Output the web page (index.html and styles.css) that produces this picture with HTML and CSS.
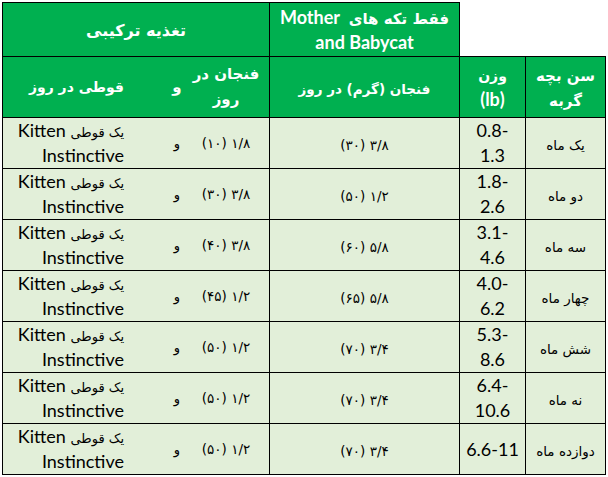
FILE: index.html
```html
<!DOCTYPE html>
<html lang="fa">
<head>
<meta charset="utf-8">
<title>Kitten feeding</title>
<link rel="stylesheet" href="styles.css">
</head>
<body>
<table class="feed" dir="rtl">
  <colgroup>
    <col class="c-age"><col class="c-wt"><col class="c-cup"><col class="c-mix">
  </colgroup>
  <tr class="h1">
    <td class="blank" colspan="2"></td>
    <th class="hd"><span class="line"><span class="fa s15">فقط تکه های</span>&nbsp; Mother</span><br>and Babycat</th>
    <th class="hd"><span class="fa s16">تغذیه ترکیبی</span></th>
  </tr>
  <tr class="h2">
    <th class="hd"><span class="fa s15">سن بچه<br>گربه</span></th>
    <th class="hd"><span class="fa s14">وزن</span><br>(lb)</th>
    <th class="hd"><span class="fa s13">فنجان (گرم) در روز</span></th>
    <th class="hd mix"><div class="split"><span class="cup fa s15">فنجان در<br>روز</span><span class="and fa s15">و</span><span class="can fa s14">قوطی در روز</span></div></th>
  </tr>
  <tr class="row">
    <td><span class="fa">یک ماه</span></td>
    <td class="wt">0.8-<br>1.3</td>
    <td><span class="fa">۳/۸ (۳۰)</span></td>
    <td class="mix"><div class="split"><span class="cup fa">۱/۸ (۱۰)</span><span class="and fa">و</span><span class="can"><span class="fa">یک قوطی</span> Kitten<br>Instinctive</span></div></td>
  </tr>
  <tr class="row">
    <td><span class="fa">دو ماه</span></td>
    <td class="wt">1.8-<br>2.6</td>
    <td><span class="fa">۱/۲ (۵۰)</span></td>
    <td class="mix"><div class="split"><span class="cup fa">۳/۸ (۳۰)</span><span class="and fa">و</span><span class="can"><span class="fa">یک قوطی</span> Kitten<br>Instinctive</span></div></td>
  </tr>
  <tr class="row">
    <td><span class="fa">سه ماه</span></td>
    <td class="wt">3.1-<br>4.6</td>
    <td><span class="fa">۵/۸ (۶۰)</span></td>
    <td class="mix"><div class="split"><span class="cup fa">۳/۸ (۴۰)</span><span class="and fa">و</span><span class="can"><span class="fa">یک قوطی</span> Kitten<br>Instinctive</span></div></td>
  </tr>
  <tr class="row">
    <td><span class="fa">چهار ماه</span></td>
    <td class="wt">4.0-<br>6.2</td>
    <td><span class="fa">۵/۸ (۶۵)</span></td>
    <td class="mix"><div class="split"><span class="cup fa">۱/۲ (۴۵)</span><span class="and fa">و</span><span class="can"><span class="fa">یک قوطی</span> Kitten<br>Instinctive</span></div></td>
  </tr>
  <tr class="row">
    <td><span class="fa">شش ماه</span></td>
    <td class="wt">5.3-<br>8.6</td>
    <td><span class="fa">۳/۴ (۷۰)</span></td>
    <td class="mix"><div class="split"><span class="cup fa">۱/۲ (۵۰)</span><span class="and fa">و</span><span class="can"><span class="fa">یک قوطی</span> Kitten<br>Instinctive</span></div></td>
  </tr>
  <tr class="row">
    <td><span class="fa">نه ماه</span></td>
    <td class="wt">6.4-<br>10.6</td>
    <td><span class="fa">۳/۴ (۷۰)</span></td>
    <td class="mix"><div class="split"><span class="cup fa">۱/۲ (۵۰)</span><span class="and fa">و</span><span class="can"><span class="fa">یک قوطی</span> Kitten<br>Instinctive</span></div></td>
  </tr>
  <tr class="row">
    <td><span class="fa">دوازده ماه</span></td>
    <td class="wt">6.6-11</td>
    <td><span class="fa">۳/۴ (۷۰)</span></td>
    <td class="mix"><div class="split"><span class="cup fa">۱/۲ (۵۰)</span><span class="and fa">و</span><span class="can"><span class="fa">یک قوطی</span> Kitten<br>Instinctive</span></div></td>
  </tr>
</table>
</body>
</html>
```

FILE: styles.css
```css
html, body {
  margin: 0;
  padding: 0;
  background: #ffffff;
}

.feed {
  margin: 2px 0 0 2px;
  border-collapse: collapse;
  table-layout: fixed;
  width: 603px;
  font-family: Lato, "DejaVu Sans", sans-serif;
  font-size: 18px;
  line-height: 25px;
  color: #000000;
}

.c-age { width: 80px; }
.c-wt { width: 66px; }
.c-cup { width: 190px; }
.c-mix { width: 267px; }

.feed td,
.feed th {
  border: 1px solid #000000;
  padding: 0 3px;
  text-align: center;
  vertical-align: middle;
  background: #e2efd9;
  font-weight: normal;
  overflow: hidden;
}

.feed .hd {
  background: #00b050;
  color: #ffffff;
  font-weight: bold;
}

.feed .blank {
  background: #ffffff;
  border-top: none;
  border-right: none;
}

.h1 th, .h1 td { height: 53px; }
.h2 th { height: 60px; }
.row td { height: 50px; }

.feed .wt {
  direction: ltr;
}

.line {
  white-space: nowrap;
}

.fa {
  font-family: "DejaVu Sans", sans-serif;
  font-size: 13px;
  line-height: 16px;
}

.cup.fa, .feed td > .fa {
  font-size: 13.5px;
}

.cup.fa, .and.fa, .can.fa {
  line-height: 25px;
}

.hd .s13 { font-size: 13.5px; }
.hd .s14 { font-size: 14px; }
.hd .s15 { font-size: 15px; }
.hd .s16 { font-size: 16px; }

.feed .mix {
  padding: 0;
}

.split {
  display: flex;
  align-items: center;
}

.split > span {
  flex: none;
  min-width: 0;
  white-space: nowrap;
}

.cup {
  width: 70px;
  margin-right: 8px;
  text-align: center;
}

.and {
  width: 20px;
  margin-right: 4px;
  text-align: center;
}

.can {
  width: 112px;
  margin-right: 43px;
  text-align: start;
}
```
